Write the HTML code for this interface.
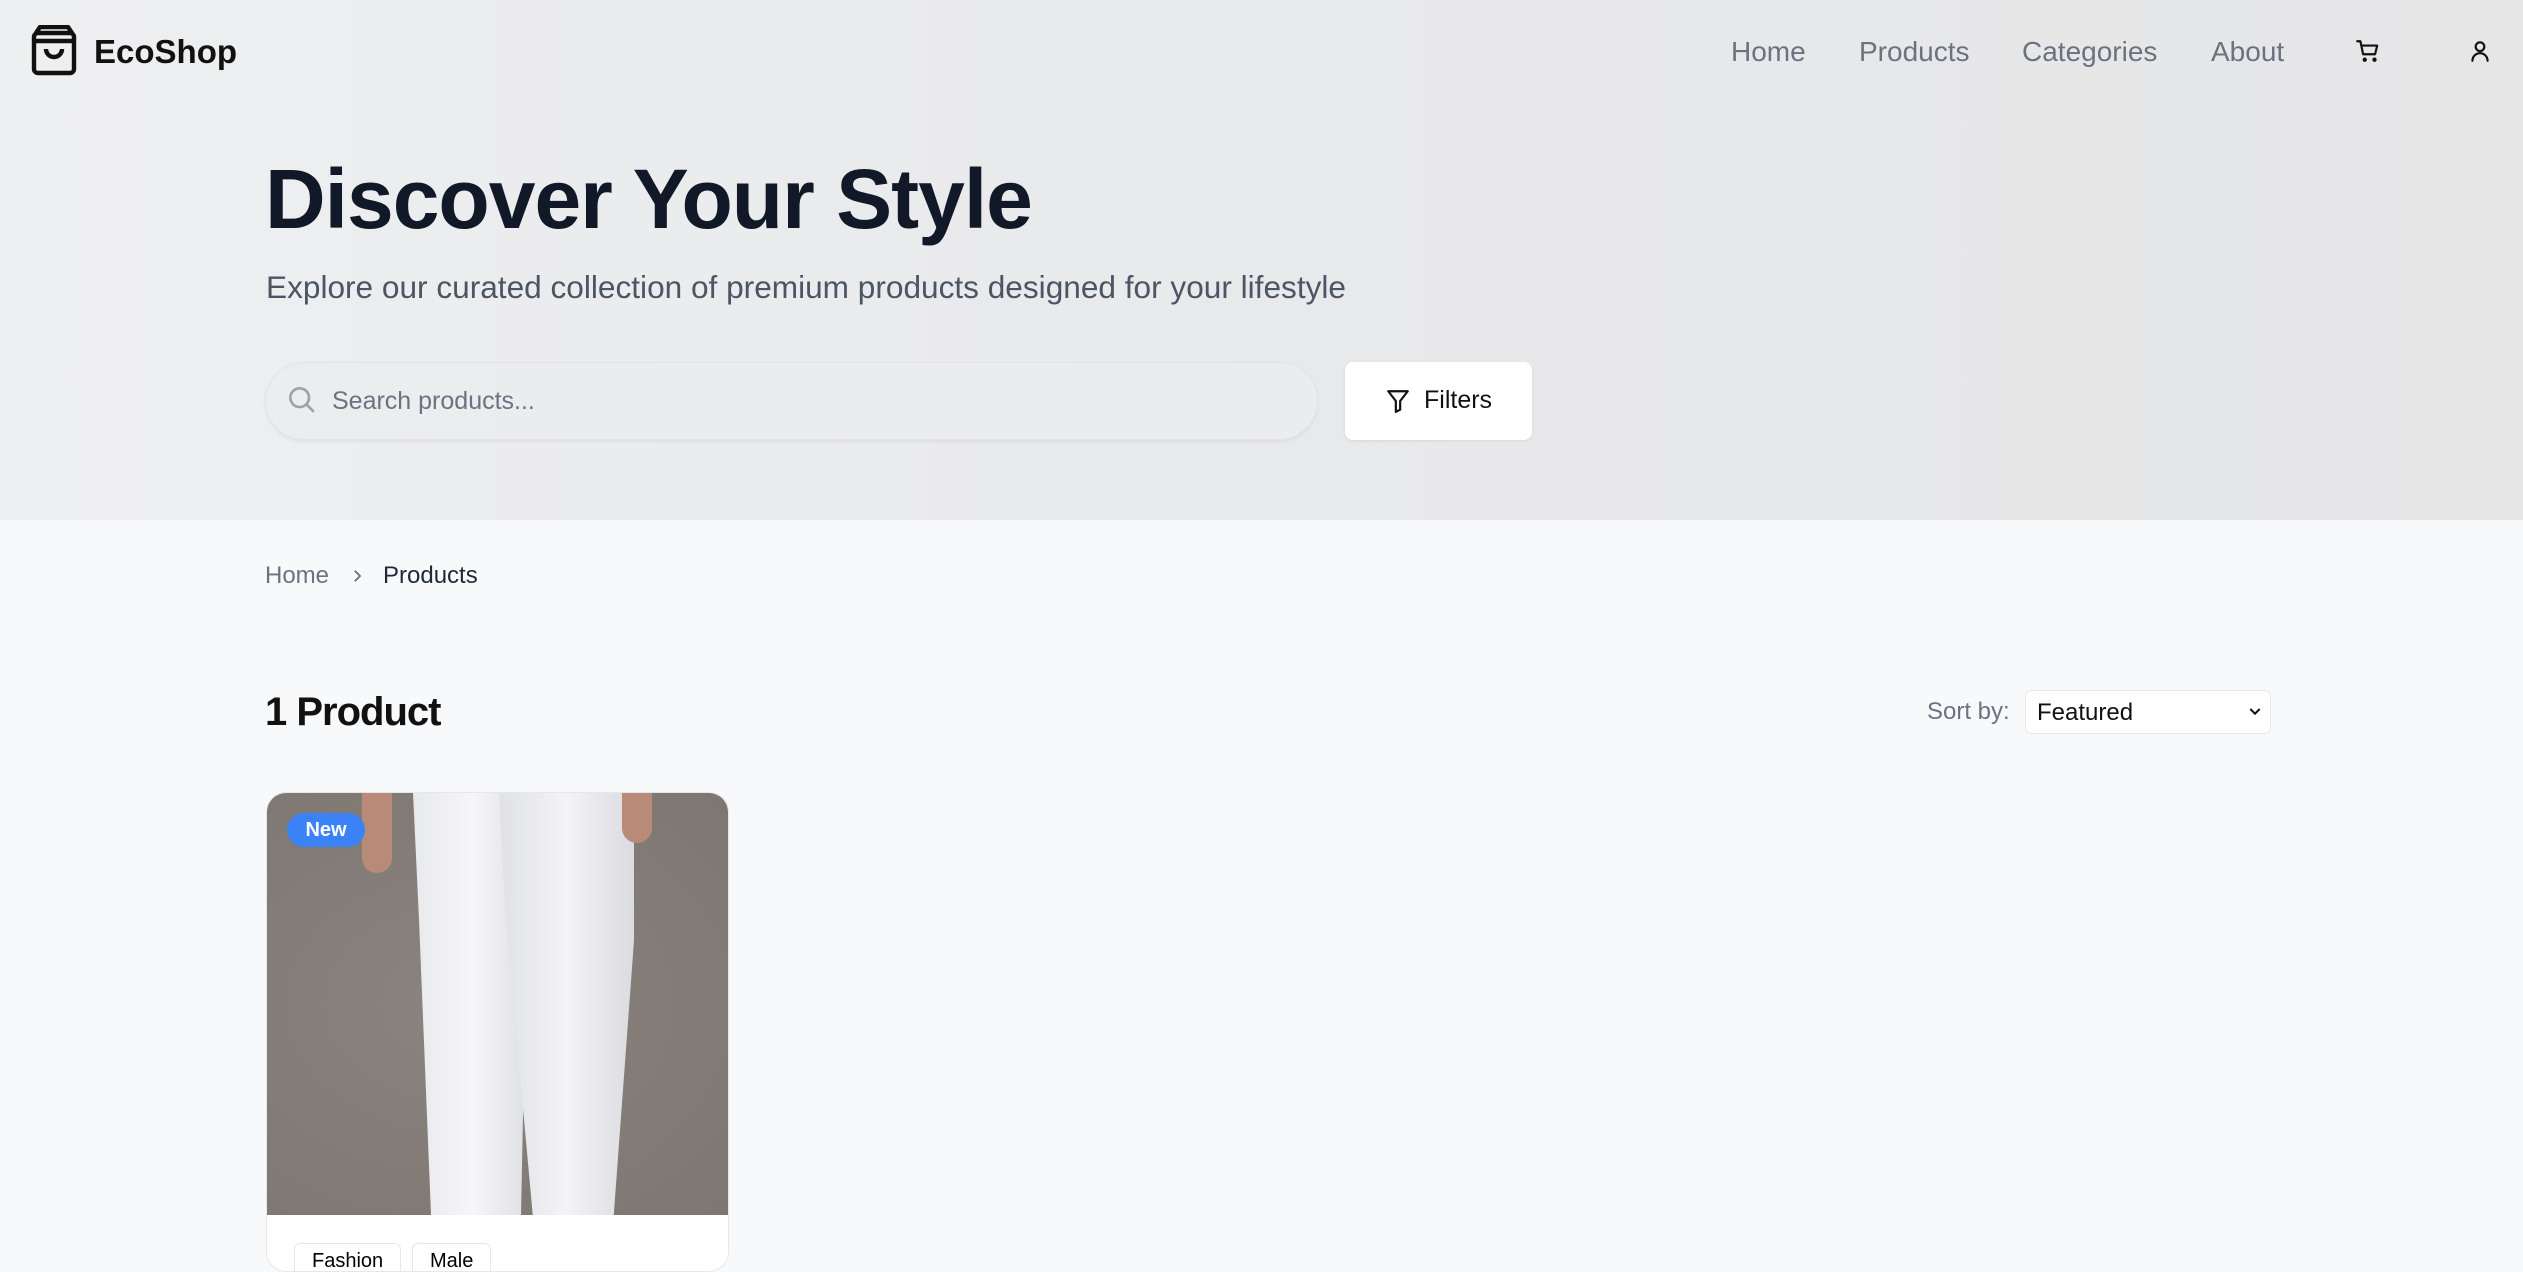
<!DOCTYPE html>
<html><head><meta charset="utf-8"><style>
*{margin:0;padding:0;box-sizing:border-box}
body{width:2523px;height:1261px;overflow:hidden;background:#f8f9fb;font-family:"Liberation Sans",Arial,sans-serif;position:relative}
.hero{position:absolute;left:0;top:0;width:2523px;height:520px;background:linear-gradient(90deg,#eeeff0 0%,#e8e9eb 50%,#e6e6e7 100%)}
.abs{position:absolute}
.nav a{position:absolute;top:36px;font-size:28px;color:#6b7280;text-decoration:none}
</style></head><body>
<div class="hero"></div>
<svg class="abs" style="left:30px;top:25px" width="48" height="52" viewBox="0 0 24 26" fill="none" stroke="#111" stroke-width="2.2" stroke-linejoin="round"><rect x="2" y="4" width="20" height="20" rx="2"/><path d="M2 8h20M3 4l2-3h14l2 3"/><path d="M8 12a4 4 0 0 0 8 0"/></svg>
<div class="abs" style="left:94px;top:33px;font-size:33px;font-weight:bold;color:#111">EcoShop</div>
<div class="nav"><a style="left:1731px">Home</a><a style="left:1859px">Products</a><a style="left:2022px">Categories</a><a style="left:2211px">About</a></div>
<svg class="abs" style="left:2355px;top:38px" width="26" height="26" viewBox="0 0 24 24" fill="none" stroke="#111" stroke-width="2" stroke-linecap="round" stroke-linejoin="round"><circle cx="9" cy="20" r="1"/><circle cx="18" cy="20" r="1"/><path d="M2 3h3l2.5 12h11l2-8H6"/></svg>
<svg class="abs" style="left:2467px;top:38px" width="26" height="26" viewBox="0 0 24 24" fill="none" stroke="#111" stroke-width="2" stroke-linecap="round"><circle cx="12" cy="8" r="4"/><path d="M5 21a7 7 0 0 1 14 0"/></svg>
<div class="abs" style="left:265px;top:151px;font-size:84px;font-weight:bold;color:#111827;letter-spacing:-1px">Discover Your Style</div>
<div class="abs" style="left:266px;top:269px;font-size:31.6px;color:#4b5563">Explore our curated collection of premium products designed for your lifestyle</div>
<div class="abs" style="left:265px;top:362px;width:1053px;height:78px;border-radius:39px;background:rgba(235,236,238,.8);border:1px solid #e2e3e6;box-shadow:0 2px 3px rgba(0,0,0,.05)"></div>
<svg class="abs" style="left:285px;top:382px" width="32" height="34" viewBox="0 0 24 24" fill="none" stroke="#9ca3af" stroke-width="2" stroke-linecap="round"><circle cx="11" cy="11" r="7"/><path d="M16 16l5 5"/></svg>
<div class="abs" style="left:332px;top:387px;font-size:25px;color:#6b7280">Search products...</div>
<div class="abs" style="left:1345px;top:362px;width:187px;height:78px;border-radius:8px;background:#fff;box-shadow:0 1px 3px rgba(0,0,0,.08)"></div>
<svg class="abs" style="left:1385px;top:387px" width="26" height="28" viewBox="0 0 24 24" fill="none" stroke="#111" stroke-width="2" stroke-linejoin="round"><path d="M3 3h18l-7 9v8l-4 2v-10z"/></svg>
<div class="abs" style="left:1424px;top:386px;font-size:25px;color:#111">Filters</div>
<div class="abs" style="left:265px;top:562px;font-size:24px;color:#6b7280">Home</div>
<svg class="abs" style="left:348px;top:566px" width="18" height="20" viewBox="0 0 24 24" fill="none" stroke="#6b7280" stroke-width="2.5"><path d="M9 5l7 7-7 7"/></svg>
<div class="abs" style="left:383px;top:562px;font-size:24px;color:#1f2937">Products</div>
<div class="abs" style="left:265px;top:690px;font-size:40px;font-weight:bold;color:#111;letter-spacing:-1px">1 Product</div>
<div class="abs" style="left:1927px;top:698px;font-size:24px;color:#6b7280">Sort by:</div>
<div class="abs" style="left:2025px;top:690px;width:246px;height:44px;border:1px solid #e5e7eb;border-radius:6px;background:#fff;font-size:24px;color:#111;padding:8px 0 0 11px">Featured</div>
<svg class="abs" style="left:2247px;top:703px" width="16" height="16" viewBox="0 0 24 24" fill="none" stroke="#111" stroke-width="3"><path d="M5 9l7 7 7-7"/></svg>
<div class="abs" style="left:266px;top:792px;width:463px;height:480px;border-radius:20px;background:#fff;border:1px solid #e5e7eb;overflow:hidden">
<div style="position:absolute;left:0;top:0;width:463px;height:422px;background:radial-gradient(ellipse at 40% 50%,#8a837e,#7d7671)"></div>
<div style="position:absolute;left:146px;top:0;width:120px;height:422px;background:linear-gradient(90deg,#e8e9ec,#f6f6f8 50%,#dcdde2);clip-path:polygon(0 0,100% 0,95% 30%,90% 100%,15% 100%,5% 30%)"></div>
<div style="position:absolute;left:232px;top:0;width:135px;height:422px;background:linear-gradient(90deg,#e0e1e5,#f4f4f6 50%,#dadbe0);clip-path:polygon(0 0,100% 0,100% 35%,85% 100%,25% 100%,5% 30%)"></div>
<div style="position:absolute;left:95px;top:0;width:30px;height:80px;background:#b88a78;border-radius:0 0 15px 15px"></div>
<div style="position:absolute;left:355px;top:0;width:30px;height:50px;background:#b88a78;border-radius:0 0 15px 15px"></div>
<div style="position:absolute;left:20px;top:20px;width:78px;height:34px;border-radius:17px;background:#3b82f6;color:#fff;font-size:20px;font-weight:bold;text-align:center;line-height:34px">New</div>
<div style="position:absolute;left:27px;top:450px;width:107px;height:40px;border:1px solid #e5e7eb;border-radius:6px;font-size:20px;padding:6px 0 0 17px">Fashion</div>
<div style="position:absolute;left:145px;top:450px;width:79px;height:40px;border:1px solid #e5e7eb;border-radius:6px;font-size:20px;padding:6px 0 0 17px">Male</div>
</div>
</body></html>
